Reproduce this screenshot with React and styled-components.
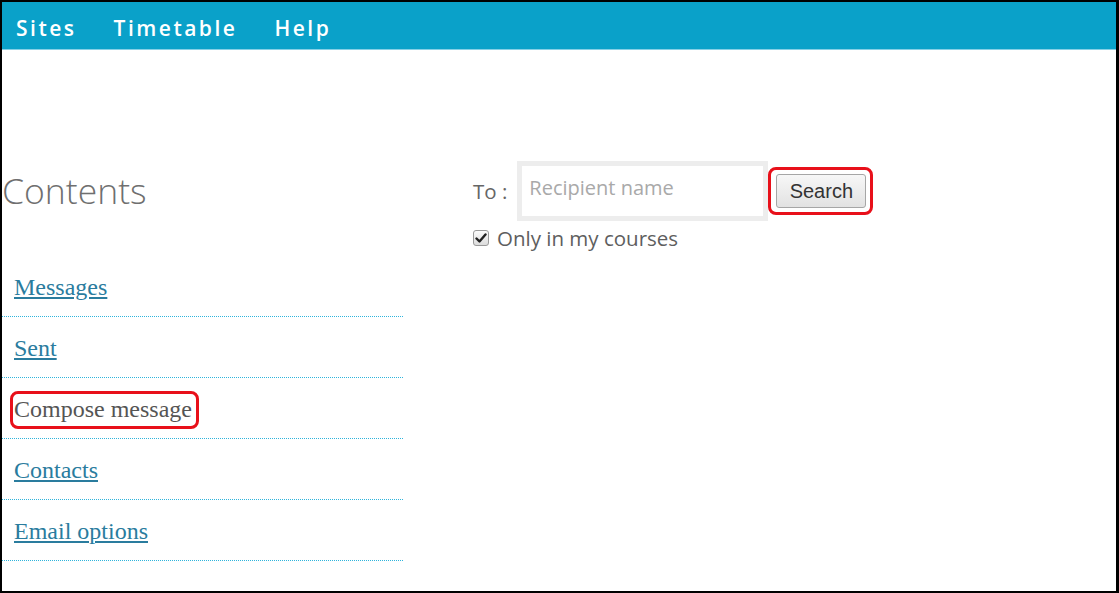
import React from "react";
import styled, { createGlobalStyle } from "styled-components";

const Global = createGlobalStyle`
  html, body { margin: 0; padding: 0; background: #fff; }
  * { box-sizing: border-box; }
`;

const Frame = styled.div`
  width: 1119px;
  height: 593px;
  border: 2px solid #000;
  border-right-width: 3px;
  overflow: hidden;
  background: #fff;
  font-family: "Open Sans", sans-serif;
`;

const TopBar = styled.nav`
  height: 48px;
  background: #0aa1c9;
  border-bottom: 1px solid #86d0e6;
  display: flex;
  align-items: flex-start;
  gap: 37px;
  padding: 11px 0 0 14px;
`;

const TopItem = styled.a`
  color: #fff;
  font-family: "Open Sans", sans-serif;
  font-weight: 600;
  font-size: 21px;
  letter-spacing: 2.5px;
  line-height: 30px;
  text-decoration: none;
`;

const Main = styled.div`
  display: grid;
  grid-template-columns: 401px 1fr;
  column-gap: 70px;
`;

const Sidebar = styled.aside`
  padding-top: 120px;
`;

const Title = styled.h2`
  margin: 0;
  font-family: "Open Sans", sans-serif;
  font-weight: 300;
  font-size: 35.5px;
  line-height: 40px;
  color: #6f6f6f;
  height: 86px;
`;

const NavList = styled.ul`
  list-style: none;
  margin: 0;
  padding: 0;
`;

const NavItem = styled.li`
  padding: 16px 0 14px 12px;
  border-bottom: 1px dotted #2fb4dc;
  font-family: "Liberation Serif", serif;
  font-size: 24px;
  line-height: 30px;
`;

const NavLink = styled.a`
  color: #2a7c9e;
  text-decoration: underline;
  text-underline-offset: 2px;
`;

const Current = styled.span`
  position: relative;
  color: #555;
  &::after {
    content: "";
    position: absolute;
    top: -5px;
    bottom: -7px;
    left: -4px;
    right: -7px;
    border: 3px solid #e8101a;
    border-radius: 8px;
  }
`;

const Content = styled.section`
  padding-top: 111px;
`;

const SearchRow = styled.div`
  display: flex;
  align-items: center;
`;

const Label = styled.label`
  font-size: 20.5px;
  color: #666;
  margin-right: 10px;
  line-height: 27px;
`;

const TextInput = styled.input`
  width: 251px;
  height: 60px;
  border: 5px solid #ededed;
  padding: 0 7px 7px;
  font-family: "Open Sans", sans-serif;
  font-size: 20px;
  color: #444;
  outline: none;
  &::placeholder { color: #a9a9a9; }
`;

const Highlight = styled.span`
  position: relative;
  margin-left: 8px;
  display: inline-flex;
  &::after {
    content: "";
    position: absolute;
    top: -7px;
    bottom: -7px;
    left: -8px;
    right: -7px;
    border: 3px solid #e8101a;
    border-radius: 8px;
    pointer-events: none;
  }
`;

const Button = styled.button`
  width: 90px;
  height: 34px;
  border: 1px solid #a6a6a6;
  border-radius: 3px;
  background: linear-gradient(#f7f7f7, #e2e2e2);
  font-family: "Liberation Sans", Arial, sans-serif;
  font-size: 20px;
  color: #333;
  padding: 0;
`;

const CheckRow = styled.label`
  display: flex;
  align-items: center;
  gap: 8px;
  margin-top: 3px;
  font-size: 20.5px;
  line-height: 28px;
  color: #5e5e5e;
`;

const CheckBox = styled.span`
  width: 16px;
  height: 16px;
  border: 1px solid #9a9a9a;
  border-radius: 3px;
  background: linear-gradient(#fcfcfc, #dcdcdc);
  display: inline-flex;
  align-items: center;
  justify-content: center;
`;

export default function App() {
  return (
    <>
      <Global />
      <Frame>
        <TopBar>
          <TopItem href="#">Sites</TopItem>
          <TopItem href="#">Timetable</TopItem>
          <TopItem href="#">Help</TopItem>
        </TopBar>
        <Main>
          <Sidebar>
            <Title>Contents</Title>
            <NavList>
              <NavItem><NavLink href="#">Messages</NavLink></NavItem>
              <NavItem><NavLink href="#">Sent</NavLink></NavItem>
              <NavItem><Current>Compose message</Current></NavItem>
              <NavItem><NavLink href="#">Contacts</NavLink></NavItem>
              <NavItem><NavLink href="#">Email options</NavLink></NavItem>
            </NavList>
          </Sidebar>
          <Content>
            <SearchRow>
              <Label>To :</Label>
              <TextInput placeholder="Recipient name" />
              <Highlight>
                <Button>Search</Button>
              </Highlight>
            </SearchRow>
            <CheckRow>
              <CheckBox>
                <svg width="12" height="12" viewBox="0 0 12 12">
                  <path d="M1.5 6.5 L4.5 9.5 L10.5 2.5" fill="none" stroke="#222" strokeWidth="2.4" strokeLinecap="round" strokeLinejoin="round" />
                </svg>
              </CheckBox>
              Only in my courses
            </CheckRow>
          </Content>
        </Main>
      </Frame>
    </>
  );
}
